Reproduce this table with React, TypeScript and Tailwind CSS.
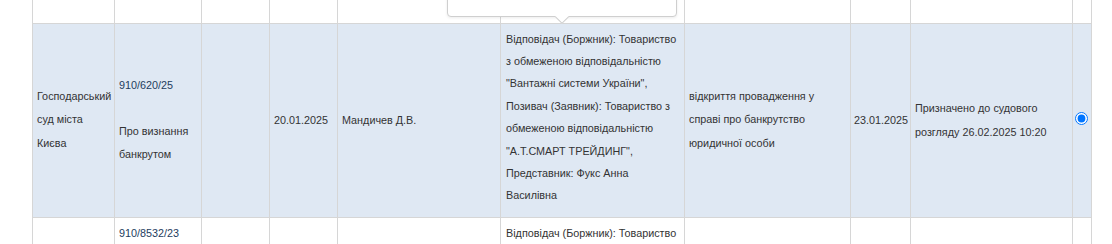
import React from "react";

const font = { fontFamily: '"Liberation Sans", Arial, sans-serif' };

export default function App() {
  const td = "border border-[#d6d6d6] px-[4px] py-[4px] align-middle";
  return (
    <div className="relative h-[244px] w-[1112px] overflow-hidden bg-white text-[10.8px] text-[#333]" style={font}>
      <table className="ml-[32px] border-collapse table-fixed w-[1059px]">
        <colgroup>
          <col className="w-[82px]" />
          <col className="w-[87px]" />
          <col className="w-[68px]" />
          <col className="w-[68px]" />
          <col className="w-[163px]" />
          <col className="w-[184px]" />
          <col className="w-[166px]" />
          <col className="w-[60px]" />
          <col className="w-[162px]" />
          <col className="w-[19px]" />
        </colgroup>
        <tbody>
          <tr className="h-[23px]">
            {Array.from({ length: 10 }).map((_, i) => (
              <td key={i} className="border border-t-0 border-[#d6d6d6] p-0"></td>
            ))}
          </tr>
          <tr className="h-[194px] bg-[#dfe8f3]">
            <td className={`${td} leading-[23.3px]`}>
              Господарський<br />суд міста<br />Києва
            </td>
            <td className={`${td} leading-[23.3px]`}>
              <a className="text-[#1d3d5e]">910/620/25</a>
              <br />
              <br />
              Про визнання<br />банкрутом
            </td>
            <td className={td}></td>
            <td className={td}>20.01.2025</td>
            <td className={td}>Мандичев Д.В.</td>
            <td className="border border-[#d6d6d6] px-[5px] pt-[4px] pb-[10px] align-top leading-[22.4px]">
              Відповідач (Боржник): Товариство<br />
              з обмеженою відповідальністю<br />
              "Вантажні системи України",<br />
              Позивач (Заявник): Товариство з<br />
              обмеженою відповідальністю<br />
              "А.Т.СМАРТ ТРЕЙДИНГ",<br />
              Представник: Фукс Анна<br />
              Василівна
            </td>
            <td className={`${td} leading-[23.3px]`}>
              відкриття провадження у<br />справі про банкрутство<br />юридичної особи
            </td>
            <td className="border border-[#d6d6d6] px-[3px] py-[4px] align-middle whitespace-nowrap">23.01.2025</td>
            <td className={`${td} leading-[24px]`}>
              Призначено до судового<br />розгляду 26.02.2025 10:20
            </td>
            <td className="border border-[#d6d6d6] p-0 text-center align-middle">
              <input type="radio" checked readOnly className="m-0 ml-[-2px] mt-[-6px] align-middle" />
            </td>
          </tr>
          <tr className="bg-white">
            <td className={td}></td>
            <td className={`${td} align-top leading-[22.4px]`}>
              <a className="text-[#1d3d5e]">910/8532/23</a>
            </td>
            <td className={td}></td>
            <td className={td}></td>
            <td className={td}></td>
            <td className="border border-[#d6d6d6] px-[5px] pt-[4px] align-top leading-[22.4px]">
              Відповідач (Боржник): Товариство<br />
              з обмеженою відповідальністю<br />
              "Вантажні системи України"
            </td>
            <td className={td}></td>
            <td className={td}></td>
            <td className={td}></td>
            <td className={td}></td>
          </tr>
        </tbody>
      </table>
      <div className="absolute left-[447px] top-[-20px] h-[37px] w-[230px] rounded-[4px] border border-[#cfcfcf] bg-white shadow-[0_1px_3px_rgba(0,0,0,0.08)]">
        <div className="absolute left-[109px] bottom-[-6px] h-[10px] w-[10px] rotate-45 border-b border-r border-[#cfcfcf] bg-white"></div>
      </div>
    </div>
  );
}
